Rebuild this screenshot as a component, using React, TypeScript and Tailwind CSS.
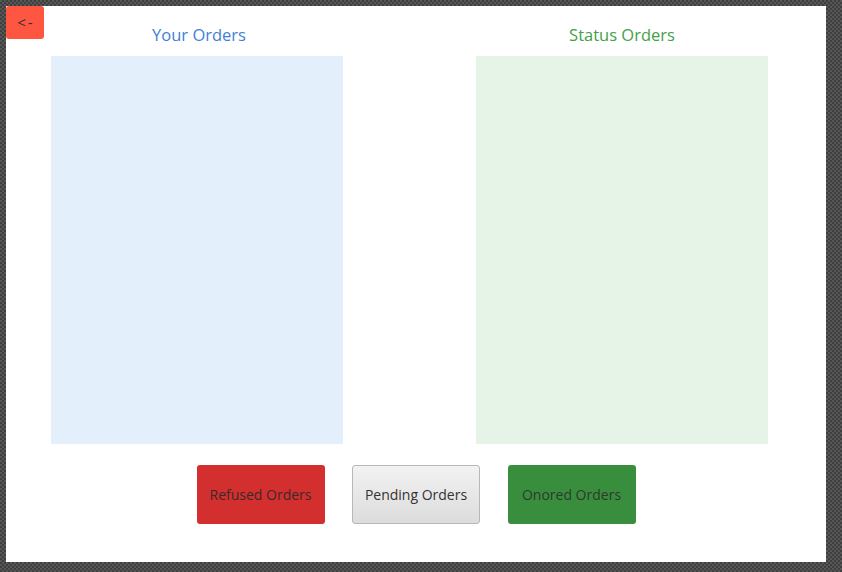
import React from "react";

export default function App() {
  return (
    <div
      className="w-[842px] h-[572px] overflow-hidden bg-[#4a4a4a] bg-[image:repeating-conic-gradient(#3f3f3f_0%_25%,#575757_0%_50%)] bg-[length:4px_4px] pt-[6px] pl-[6px]"
      style={{ fontFamily: '"Open Sans", "Noto Sans", sans-serif' }}
    >
      <div className="relative w-[820px] h-[556px] bg-white flex flex-col">
        <button className="absolute left-0 top-0 w-[38px] h-[33px] rounded-[3px] bg-[#ff5641] text-[#333] text-[15px] tracking-[2px] pl-[2px] flex items-center justify-center">
          &lt;-
        </button>
        <div className="flex pl-[45px] gap-[133px] pt-[17px]">
          <div className="w-[292px] flex flex-col items-center">
            <div className="h-[24px] leading-[24px] text-[16.5px] text-[#3f80d6] mb-[9px] pl-[4px]">Your Orders</div>
            <div className="w-[292px] h-[388px] bg-[#e3f0fc]" />
          </div>
          <div className="w-[292px] flex flex-col items-center">
            <div className="h-[24px] leading-[24px] text-[16.5px] text-[#43a047] mb-[9px]">Status Orders</div>
            <div className="w-[292px] h-[388px] bg-[#e6f4e7]" />
          </div>
        </div>
        <div className="flex justify-center gap-[27.5px] mt-[21px]">
          <button className="w-[128px] h-[59px] rounded-[3px] bg-[#d32f2f] text-[#3a2a2a] text-[14px]">
            Refused Orders
          </button>
          <button className="w-[128px] h-[59px] rounded-[3px] border border-[#b8b8b8] bg-gradient-to-b from-[#f2f2f2] to-[#dcdcdc] text-[#333] text-[14px]">
            Pending Orders
          </button>
          <button className="w-[128px] h-[59px] rounded-[3px] bg-[#388e3c] text-[#2f3a2f] text-[14px]">
            Onored Orders
          </button>
        </div>
      </div>
    </div>
  );
}
